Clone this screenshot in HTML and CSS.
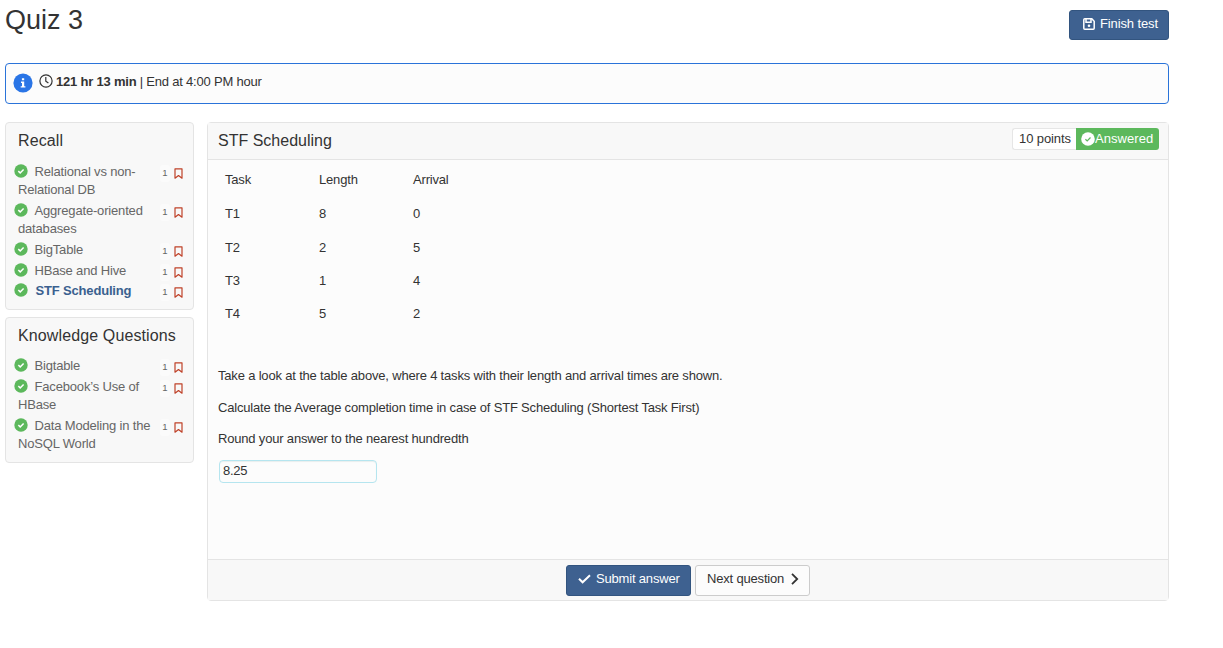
FILE: index.html
```html
<!DOCTYPE html>
<html lang="en">
<head>
<meta charset="utf-8">
<title>Quiz 3</title>
<link rel="stylesheet" href="styles.css">
</head>
<body>
<svg class="defs" width="0" height="0">
  <symbol id="done" viewBox="0 0 14 14"><circle cx="7" cy="7" r="6.7" fill="#5cb85c"/><path d="M4.3 7.1l1.9 1.8 3.4-3.5" fill="none" stroke="#fff" stroke-width="1.5"/></symbol>
  <symbol id="mark" viewBox="0 0 9 11"><path d="M1 .8h7v9.4L4.5 7.5 1 10.2z" fill="none" stroke="#bf4229" stroke-width="1.2" stroke-linejoin="round"/></symbol>
</svg>
<div class="page">
  <header class="top">
    <h1>Quiz 3</h1>
    <button class="btn primary finish"><svg width="12" height="12" viewBox="0 0 12 12" fill="none" stroke="#fff" stroke-width="1.5"><path d="M.8 1.8q0-1 1-1h7l2.4 2.4v7q0 1-1 1H1.8q-1 0-1-1z"/><path d="M3 1v3.3h5V1"/><circle cx="6" cy="7.7" r="1.3" fill="#fff" stroke="none"/></svg><span>Finish test</span></button>
  </header>
  <div class="notice">
    <svg class="info" width="20" height="20" viewBox="0 0 20 20"><circle cx="10" cy="10" r="9.6" fill="#2a75e6"/><path d="M8.9 5.3h2.3v2H8.9zM8 8.5h3.2v4.7h1.2v1.4H7.7v-1.4H9v-3.3H8z" fill="#fff"/></svg>
    <svg class="clock" width="14" height="14" viewBox="0 0 14 14" fill="none" stroke="#333" stroke-width="1.2"><circle cx="7" cy="7" r="6.1"/><path d="M6.8 3v4.2l2.6 1.9"/></svg>
    <p><b>121 hr 13 min</b> | End at 4:00 PM hour</p>
  </div>
  <div class="columns">
    <nav class="side">
      <section class="group recall">
        <h2>Recall</h2>
        <ul>
          <li><a><svg class="done"><use href="#done"/></svg>Relational vs non-<br>Relational DB</a><span class="pts">1</span><svg class="mark"><use href="#mark"/></svg></li>
          <li><a><svg class="done"><use href="#done"/></svg>Aggregate-oriented<br>databases</a><span class="pts">1</span><svg class="mark"><use href="#mark"/></svg></li>
          <li><a><svg class="done"><use href="#done"/></svg>BigTable</a><span class="pts">1</span><svg class="mark"><use href="#mark"/></svg></li>
          <li><a><svg class="done"><use href="#done"/></svg>HBase and Hive</a><span class="pts">1</span><svg class="mark"><use href="#mark"/></svg></li>
          <li class="current"><a><svg class="done"><use href="#done"/></svg>STF Scheduling</a><span class="pts">1</span><svg class="mark"><use href="#mark"/></svg></li>
        </ul>
      </section>
      <section class="group knowledge">
        <h2>Knowledge Questions</h2>
        <ul>
          <li><a><svg class="done"><use href="#done"/></svg>Bigtable</a><span class="pts">1</span><svg class="mark"><use href="#mark"/></svg></li>
          <li><a><svg class="done"><use href="#done"/></svg>Facebook’s Use of<br>HBase</a><span class="pts">1</span><svg class="mark"><use href="#mark"/></svg></li>
          <li><a><svg class="done"><use href="#done"/></svg>Data Modeling in the<br>NoSQL World</a><span class="pts">1</span><svg class="mark"><use href="#mark"/></svg></li>
        </ul>
      </section>
    </nav>
    <main class="question">
      <div class="question-head">
        <h2>STF Scheduling</h2>
        <div class="status"><span class="points">10 points</span><span class="answered"><svg width="14" height="14" viewBox="0 0 14 14"><circle cx="7" cy="7" r="6.8" fill="#fff"/><path d="M4.4 7.2l1.8 1.7 3.3-3.4" fill="none" stroke="#5cb85c" stroke-width="1.2"/></svg>Answered</span></div>
      </div>
      <div class="question-body">
        <table>
          <tr><td>Task</td><td>Length</td><td>Arrival</td></tr>
          <tr><td>T1</td><td>8</td><td>0</td></tr>
          <tr><td>T2</td><td>2</td><td>5</td></tr>
          <tr><td>T3</td><td>1</td><td>4</td></tr>
          <tr><td>T4</td><td>5</td><td>2</td></tr>
        </table>
        <p>Take a look at the table above, where 4 tasks with their length and arrival times are shown.</p>
        <p>Calculate the Average completion time in case of STF Scheduling (Shortest Task First)</p>
        <p>Round your answer to the nearest hundredth</p>
        <input type="text" value="8.25">
      </div>
      <div class="question-foot">
        <button class="btn primary submit"><svg width="13" height="10" viewBox="0 0 13 10" fill="none" stroke="#fff" stroke-width="2"><path d="M1 4.8l3.6 3.5L12 1.2"/></svg><span>Submit answer</span></button>
        <button class="btn next"><span>Next question</span><svg width="8" height="12" viewBox="0 0 8 12" fill="none" stroke="#333" stroke-width="1.8"><path d="M1 .9l5.2 5.1L1 11.1"/></svg></button>
      </div>
    </main>
  </div>
</div>
</body>
</html>
```
FILE: styles.css
```css
* { box-sizing: border-box; }
body {
  margin: 0;
  background: #fff;
  color: #333;
  font: 13px/18px "Liberation Sans", Arial, sans-serif;
}
h1, h2, p, ul { margin: 0; padding: 0; font-weight: 400; }
svg { flex: none; }
.defs { display: block; }
.page { width: 1164px; margin-left: 5px; }
.top { display: flex; justify-content: space-between; height: 63px; }
h1 { font-size: 27px; line-height: 32px; padding-top: 4px; }
.btn {
  display: flex;
  align-items: center;
  height: 31px;
  padding: 0 10px 3px 11px;
  border: 1px solid #ccc;
  border-radius: 3px;
  background: #fcfcfc;
  color: #333;
  font: inherit;
  letter-spacing: -0.18px;
  white-space: nowrap;
}
.primary { background: #3e6190; border-color: #32547f; color: #fff; }
.finish { width: 100px; height: 30px; margin-top: 10px; padding-left: 13px; gap: 5px; letter-spacing: -0.12px; }
.notice {
  display: flex;
  height: 41px;
  padding: 9px 7px;
  border: 1px solid #2a73d9;
  border-radius: 4px;
  background: #fcfcfc;
  letter-spacing: -0.21px;
}
.clock { margin: 1px 3px 0 6px; }
.columns { display: flex; align-items: flex-start; gap: 13px; margin-top: 18px; }
.side { width: 189px; display: flex; flex-direction: column; gap: 7px; }
.group {
  border: 1px solid #e4e4e4;
  border-radius: 4px;
  background: #f8f8f8;
  padding: 8px 10px 0 12px;
}
.recall { height: 188px; }
.knowledge { height: 146px; }
h2 { font-size: 16px; line-height: 20px; }
.group h2 { letter-spacing: 0.12px; white-space: nowrap; }
.group ul { list-style: none; margin-top: 12px; }
.knowledge ul { margin-top: 11px; }
.group li { display: flex; align-items: flex-start; height: 18px; margin-bottom: 3px; color: #666; }
.group li:has(br) { height: 36px; }
.group a { flex: 1; white-space: nowrap; letter-spacing: -0.17px; }
.done { width: 14px; height: 14px; margin: 0 6.5px 0 -4px; vertical-align: -2px; }
.group .current { margin-top: -1px; }
.current a { color: #3a608f; font-weight: 700; }
.current .done { margin-right: 7.5px; }
.pts {
  width: 10px;
  height: 17px;
  margin: 2px 4px 0 0;
  background: #fbfbfb;
  border-radius: 3px;
  font-size: 9.5px;
  line-height: 16px;
  text-align: center;
}
.mark { width: 9px; height: 11px; margin-top: 5px; }
.question {
  width: 962px;
  height: 479px;
  display: flex;
  flex-direction: column;
  border: 1px solid #e4e4e4;
  border-radius: 4px;
  background: #fcfcfc;
}
.question-head {
  display: flex;
  justify-content: space-between;
  height: 37px;
  padding: 5px 9px 0 10px;
  border-bottom: 1px solid #e4e4e4;
  background: #f8f8f8;
}
.question-head h2 { margin-top: 3px; }
.status { display: flex; height: 22px; line-height: 21px; }
.points { width: 64px; padding-left: 6px; border: 1px solid #e6e6e6; border-right: 0; border-radius: 3px 0 0 3px; background: #fff; line-height: 20px; letter-spacing: -0.1px; white-space: nowrap; }
.answered { display: flex; align-items: center; width: 83px; padding: 0 0 1px 5px; border-radius: 0 3px 3px 0; background: #5cb85c; color: #fff; letter-spacing: 0.05px; }
.question-body { flex: 1; padding: 3px 10px 0; letter-spacing: -0.18px; }
table { border-collapse: collapse; table-layout: fixed; width: 282px; margin-bottom: 36.5px; }
td { height: 33px; padding: 8px 0 0 7px; vertical-align: top; }
tr:nth-child(-n+2) td { height: 34px; }
.question-body p { line-height: 18px; margin-bottom: 14px; }
.question-body p + p { margin-bottom: 13px; }
input {
  display: block;
  width: 158px;
  height: 23px;
  margin: -1px 0 0 1px;
  padding: 0 3px 2px;
  border: 1px solid #b5e5ef;
  border-radius: 4px;
  background: #fcfcfc;
  color: #333;
  font: inherit;
  letter-spacing: -0.3px;
  box-shadow: inset 0 1px 1px #e8eeee;
}
.question-foot {
  display: flex;
  justify-content: center;
  gap: 4px;
  height: 41px;
  padding: 5px 0 0;
  border-top: 1px solid #e4e4e4;
  background: #f8f8f8;
}
.submit { width: 125px; gap: 5px; }
.next { width: 115px; gap: 7px; }
```
